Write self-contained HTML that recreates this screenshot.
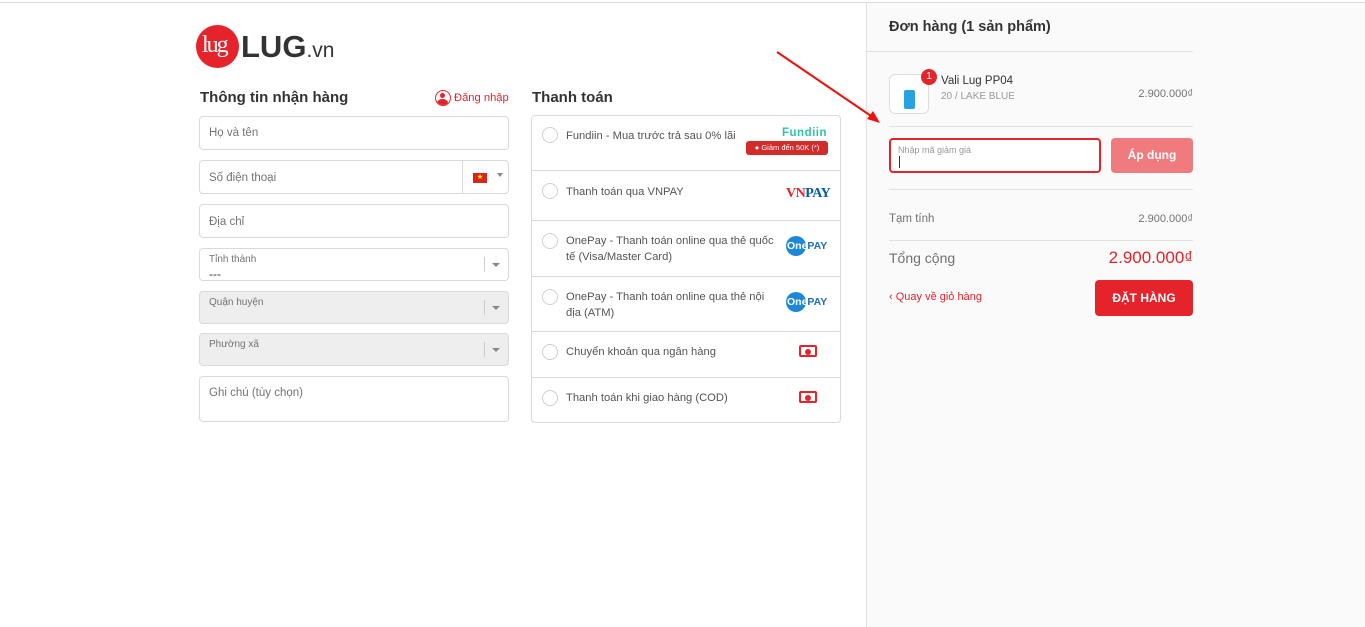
<!DOCTYPE html><html><head><meta charset="utf-8"><style>
*{box-sizing:border-box;margin:0;padding:0}
body{width:1365px;height:627px;position:relative;background:#fff;font-family:"Liberation Sans",Arial,sans-serif;color:#333;overflow:hidden;font-size:12px}
.a{position:absolute}
.f{position:absolute;left:199px;width:310px;border:1px solid #d9d9d9;border-radius:4px;color:#737373;font-size:11.5px;padding-left:9px}
.g{background:#eee}
.sel:after{content:"";position:absolute;right:8px;top:50%;margin-top:-2px;border:4px solid transparent;border-top:4px solid #888;border-bottom:0}
.sel:before{content:"";position:absolute;right:23px;top:8px;bottom:8px;border-left:1px solid #ccc}
.row{position:absolute;left:0;right:0;border-top:1px solid #d9d9d9}
.rad{position:absolute;left:10px;width:16px;height:16px;border:1px solid #cfcfcf;border-radius:50%}
.rt{position:absolute;left:34px;font-size:11.2px;color:#545454;line-height:16px;width:215px}
.line{position:absolute;left:889px;width:304px;border-top:1px solid #e1e1e1}
</style></head><body>
<div class="a" style="left:0;top:2px;width:1365px;border-top:1px solid #ddd"></div>
<div class="a" style="left:866px;top:3px;width:499px;height:624px;background:#fafafa;border-left:1px solid #e1e1e1"></div>
<div class="a" style="left:196px;top:25px;width:43px;height:43px;border-radius:50%;background:#e5232b;color:#fff;font-family:'Liberation Serif',serif;font-size:24px;line-height:40px;padding-left:6px;letter-spacing:-2px">lug</div>
<div class="a" style="left:241px;top:29px;font-size:31px;font-weight:bold;color:#333">LUG<span style="font-size:21px;font-weight:normal">.vn</span></div>
<div class="a" style="left:200px;top:89px;font-size:15px;font-weight:bold;color:#333">Thông tin nhận hàng</div>
<div class="a" style="left:435px;top:90px;width:16px;height:16px;border:1.5px solid #e5232b;border-radius:50%;overflow:hidden"><div style="position:absolute;left:4px;top:2px;width:5px;height:5px;border-radius:50%;background:#e5232b"></div><div style="position:absolute;left:1px;top:8px;width:11px;height:8px;border-radius:50%;background:#e5232b"></div></div>
<div class="a" style="left:454px;top:92px;font-size:11.2px;color:#e5232b">Đăng nhập</div>
<div class="f" style="top:116px;height:34px;line-height:33px">Họ và tên</div>
<div class="f" style="top:160px;height:34px;line-height:34px">Số điện thoại
<div class="a" style="right:0;top:0;width:46px;height:32px;border-left:1px solid #d9d9d9"><div class="a" style="left:10px;top:12px;width:14px;height:10px;background:#da251d;color:#ff0;font-size:7px;line-height:10px;text-align:center">★</div><div class="a" style="right:5px;top:12px;border:3.5px solid transparent;border-top:4px solid #888"></div></div></div>
<div class="f" style="top:204px;height:34px;line-height:34px">Địa chỉ</div>
<div class="f sel" style="top:248px;height:33px"><div style="font-size:10px;line-height:10px;margin-top:6px">Tỉnh thành</div><div style="color:#333;font-size:12px;margin-top:2px">---</div></div>
<div class="f g sel" style="top:291px;height:33px"><div style="font-size:10px;margin-top:5px">Quận huyện</div></div>
<div class="f g sel" style="top:333px;height:33px"><div style="font-size:10px;margin-top:5px">Phường xã</div></div>
<div class="f" style="top:376px;height:46px;padding-top:10px">Ghi chú (tùy chọn)</div>
<div class="a" style="left:532px;top:89px;font-size:15px;font-weight:bold">Thanh toán</div>
<div class="a" style="left:531px;top:115px;width:310px;height:308px;border:1px solid #d9d9d9;border-radius:4px">
<div class="rad" style="top:11px"></div><div class="rt" style="top:12px">Fundiin - Mua trước trả sau 0% lãi</div>
<div class="a" style="left:250px;top:11px;font-weight:bold;color:#2cc5a5;font-size:11.5px;letter-spacing:.5px">Fundiin</div>
<div class="a" style="left:214px;top:25px;width:82px;height:14px;background:#d32a2a;border-radius:3px;color:#fff;font-size:7.5px;line-height:14px;text-align:center">● Giảm đến 50K (*)</div>
<div class="row" style="top:54px"><div class="rad" style="top:12px"></div><div class="rt" style="top:13px">Thanh toán qua VNPAY</div><div class="a" style="left:254px;top:15px;font-weight:bold;font-size:14px;color:#005baa;font-family:'Liberation Serif',serif;letter-spacing:-0.5px"><span style="color:#e5232b">VN</span>PAY</div></div>
<div class="row" style="top:104px"><div class="rad" style="top:12px"></div><div class="rt" style="top:12px">OnePay - Thanh toán online qua thẻ quốc tế (Visa/Master Card)</div><div class="a" style="left:254px;top:15px;width:20px;height:20px;border-radius:50%;background:#1e88d8"></div><div class="a" style="left:255px;top:19px;font-size:10.5px;font-weight:bold;color:#fff">One<span style="color:#1e6fb8">PAY</span></div></div>
<div class="row" style="top:160px"><div class="rad" style="top:12px"></div><div class="rt" style="top:12px">OnePay - Thanh toán online qua thẻ nội địa (ATM)</div><div class="a" style="left:254px;top:15px;width:20px;height:20px;border-radius:50%;background:#1e88d8"></div><div class="a" style="left:255px;top:19px;font-size:10.5px;font-weight:bold;color:#fff">One<span style="color:#1e6fb8">PAY</span></div></div>
<div class="row" style="top:215px"><div class="rad" style="top:12px"></div><div class="rt" style="top:12px">Chuyển khoản qua ngân hàng</div><div class="a" style="left:267px;top:13px;width:18px;height:12px;border:2px solid #e5232b;border-radius:2px"><div style="margin:2px auto;width:6px;height:6px;border-radius:50%;background:#e5232b"></div></div></div>
<div class="row" style="top:261px"><div class="rad" style="top:12px"></div><div class="rt" style="top:12px">Thanh toán khi giao hàng (COD)</div><div class="a" style="left:267px;top:13px;width:18px;height:12px;border:2px solid #e5232b;border-radius:2px"><div style="margin:2px auto;width:6px;height:6px;border-radius:50%;background:#e5232b"></div></div></div>
</div>
<div class="a" style="left:889px;top:19px;font-size:14.5px;font-weight:bold;color:#333">Đơn hàng (1 sản phẩm)</div>
<div class="a" style="left:866px;top:51px;width:327px;border-top:1px solid #e1e1e1"></div>
<div class="a" style="left:889px;top:74px;width:40px;height:40px;border:1px solid #ddd;border-radius:6px;background:#fff"><div class="a" style="left:14px;top:15px;width:11px;height:19px;background:#29a3e0;border-radius:2px"></div></div>
<div class="a" style="left:921px;top:69px;width:16px;height:16px;border-radius:50%;background:#e5232b;color:#fff;font-size:10px;text-align:center;line-height:16px">1</div>
<div class="a" style="left:941px;top:75px;font-size:11.5px;color:#333">Vali Lug PP04</div>
<div class="a" style="left:941px;top:91px;font-size:10px;color:#999">20 / LAKE BLUE</div>
<div class="a" style="right:172px;top:88px;font-size:11px;color:#717171">2.900.000₫</div>
<div class="line" style="top:126px"></div>
<div class="a" style="left:889px;top:138px;width:212px;height:35px;border:2px solid #e5232b;border-radius:4px;background:#fff"><div class="a" style="left:7px;top:5px;font-size:9px;color:#999">Nhập mã giảm giá</div><div class="a" style="left:8px;top:16px;height:12px;border-left:1px solid #333"></div></div>
<div class="a" style="left:1111px;top:138px;width:82px;height:35px;background:#f07b7e;border-radius:4px;color:#fff;font-weight:bold;font-size:12px;text-align:center;line-height:35px">Áp dụng</div>
<div class="line" style="top:189px"></div>
<div class="a" style="left:889px;top:213px;font-size:11.5px;color:#717171">Tạm tính</div>
<div class="a" style="right:172px;top:213px;font-size:11px;color:#717171">2.900.000₫</div>
<div class="line" style="top:240px"></div>
<div class="a" style="left:889px;top:250px;font-size:14px;color:#717171">Tổng cộng</div>
<div class="a" style="right:172px;top:248px;font-size:17px;color:#e5232b">2.900.000₫</div>
<div class="a" style="left:889px;top:291px;font-size:11px;color:#e5232b">‹ Quay về giỏ hàng</div>
<div class="a" style="left:1095px;top:280px;width:98px;height:36px;background:#e5232b;border-radius:4px;color:#fff;font-weight:bold;font-size:12px;text-align:center;line-height:36px">ĐẶT HÀNG</div>
<svg class="a" style="left:770px;top:45px" width="120" height="90"><line x1="7" y1="7" x2="104" y2="73" stroke="#f01010" stroke-width="2"/><polygon points="110,78 97,74 103,66" fill="#f01010"/></svg>
</body></html>
